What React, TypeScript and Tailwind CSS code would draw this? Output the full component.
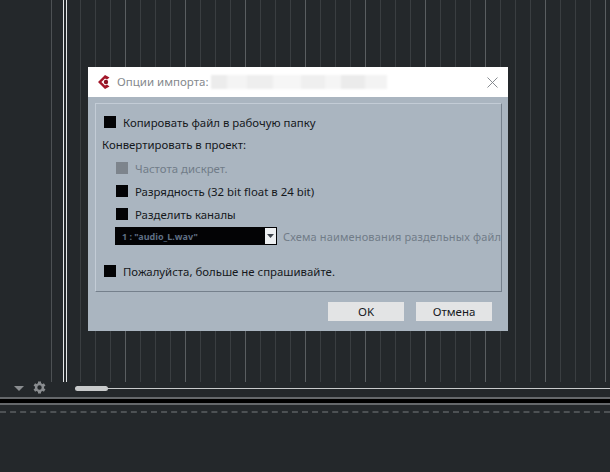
const font = 'font-["Noto_Sans","Open_Sans",sans-serif]';

// one cell per 15px, every 4th line is brighter
const gridLines = Array.from({ length: 36 }, (_, i) => i);
const gearTeeth = [0, 60, 120, 180, 240, 300];

function Box({ muted }: { muted?: boolean }) {
  return <span className={`block w-3 h-3 shrink-0 ${muted ? 'bg-[#7d848c]' : 'bg-[#030305]'}`} />;
}

function CheckRow({ label, muted, className }: { label: string; muted?: boolean; className: string }) {
  return (
    <div className={`flex items-center h-[18px] gap-[7px] ${className}`}>
      <Box muted={muted} />
      <span className={`pt-[2px] text-[11.4px] leading-none whitespace-nowrap ${muted ? 'text-[#717c88]' : 'text-[#15181c]'}`}>{label}</span>
    </div>
  );
}

function DialogButton({ label }: { label: string }) {
  return (
    <button className="w-[76px] h-[19px] bg-[#e3e4e5] text-[11.5px] leading-none text-[#15181c]">{label}</button>
  );
}

function ImportDialog() {
  return (
    <div className={`absolute left-[88px] top-[67px] w-[420px] h-[264px] flex flex-col bg-[#aab5c0] ${font}`}>
      <div className="h-[30px] bg-white flex items-center pl-[9px] pr-[9px] shrink-0">
        <svg width="15" height="16" viewBox="0 0 15 16" className="shrink-0">
          <path d="M8 1 L12.5 3.6 L10 5.6 L8 4.6 L4.4 8 L8 11.4 L10 10.4 L12.5 12.4 L8 15 L1 8 Z" fill="#a3172a" />
          <circle cx="9" cy="8" r="2.2" fill="#8c1324" />
        </svg>
        <span className="ml-[5px] text-[11.5px] leading-none text-[#85898d] whitespace-nowrap">Опции импорта:</span>
        <div className="ml-[2px] w-[176px] h-[14px] flex blur-[1px]">
          <div className="w-[16px] bg-[#ececec]" />
          <div className="w-[20px] bg-[#f4f4f4]" />
          <div className="w-[26px] bg-[#eeeeee]" />
          <div className="w-[28px] bg-[#f6f6f6]" />
          <div className="w-[24px] bg-[#efefef]" />
          <div className="w-[16px] bg-[#f5f5f5]" />
          <div className="w-[24px] bg-[#ebebeb]" />
          <div className="w-[22px] bg-[#f3f3f3]" />
        </div>
        <svg width="11" height="11" viewBox="0 0 11 11" className="ml-auto mr-[1px] shrink-0">
          <path d="M0.5 0.5 L10.5 10.5 M10.5 0.5 L0.5 10.5" stroke="#7b7f84" strokeWidth="0.9" fill="none" />
        </svg>
      </div>

      <div className="mx-[7px] mt-[6px] mr-[6px] h-[189px] border-t border-t-[#c3ccd6] border-l border-l-[#c3ccd6] border-r border-r-[#75808c] border-b border-b-[#75808c] flex flex-col overflow-hidden shrink-0">
        <CheckRow label="Копировать файл в рабочую папку" className="mt-[9px] ml-[8px]" />
        <div className="mt-[5px] ml-[6px] h-[18px] flex items-center text-[11.4px] leading-none text-[#15181c]">Конвертировать в проект:</div>
        <CheckRow label="Частота дискрет." muted className="mt-[5px] ml-[20px]" />
        <CheckRow label="Разрядность (32 bit float в 24 bit)" className="mt-[5px] ml-[20px]" />
        <CheckRow label="Разделить каналы" className="mt-[5px] ml-[20px]" />
        <div className="mt-[4px] ml-[19px] flex items-center whitespace-nowrap">
          <div className="w-[162px] h-[18px] bg-[#030305] flex items-center justify-between shrink-0 pr-px">
            <span className="ml-[7px] text-[9px] leading-none font-bold text-[#5f6f84]">1 : "audio_L.wav"</span>
            <span className="w-[11px] h-[16px] bg-[#eef0f2] flex items-center justify-center">
              <svg width="7" height="4" viewBox="0 0 7 4"><path d="M0 0H7L3.5 4Z" fill="#3f454c" /></svg>
            </span>
          </div>
          <span className="ml-[6px] mt-[1px] text-[11px] leading-none text-[#717c88] tracking-[0.15px]">Схема наименования раздельных файл</span>
        </div>
        <CheckRow label="Пожалуйста, больше не спрашивайте." className="mt-[17px] ml-[8px]" />
      </div>

      <div className="flex justify-end gap-3 mt-[10px] pr-[16px]">
        <DialogButton label="OK" />
        <DialogButton label="Отмена" />
      </div>
    </div>
  );
}

export default function App() {
  return (
    <div className="relative w-[610px] h-[472px] overflow-hidden bg-[#24282b] flex flex-col">
      {/* arrange grid */}
      <div className="h-[382px] flex shrink-0">
        <div className="w-[52px] shrink-0 border-r border-r-[#4d5154]" />
        <div className="w-[11px] shrink-0" />
        <div className="w-[4px] h-full shrink-0 border-x border-x-[#e4e6e7]" />
        <div className="flex -ml-px">
          {gridLines.map((i) => (
            <div
              key={i}
              className={`w-[15px] shrink-0 border-r ${i % 4 === 3 ? 'border-r-[#5a5e61]' : 'border-r-[#3a3e41]'}`}
            />
          ))}
        </div>
      </div>

      {/* scroll row */}
      <div className="h-[15px] flex items-center shrink-0">
        <svg width="10" height="5" viewBox="0 0 10 5" className="ml-[14px] shrink-0 mb-[3px]">
          <path d="M0 0H10L5 5Z" fill="#8a8d90" />
        </svg>
        <svg width="13" height="13" viewBox="0 0 13 13" className="ml-[9px] mb-[5px] shrink-0">
          {gearTeeth.map((a) => (
            <rect key={a} x="5" y="0.5" width="3" height="3" fill="#8a8d90" transform={`rotate(${a} 6.5 6.5)`} />
          ))}
          <circle cx="6.5" cy="6.5" r="3.4" fill="none" stroke="#8a8d90" strokeWidth="2.4" />
        </svg>
        <div className="ml-[29px] flex-1 flex items-center mt-[-3px]">
          <div className="w-[33px] h-[5px] rounded-full bg-[#c8cacb] shrink-0" />
          <div className="flex-1 h-px bg-[#c8cacb]" />
        </div>
      </div>

      {/* track separator */}
      <div className="h-[2px] bg-[#65686b] shrink-0" />
      <div className="h-1 bg-black shrink-0" />
      <div className="h-[2px] bg-[#65686b] shrink-0" />
      <div className="mt-[6px] border-t-2 border-dashed border-t-[#4d5154] shrink-0" />

      <ImportDialog />
    </div>
  );
}
